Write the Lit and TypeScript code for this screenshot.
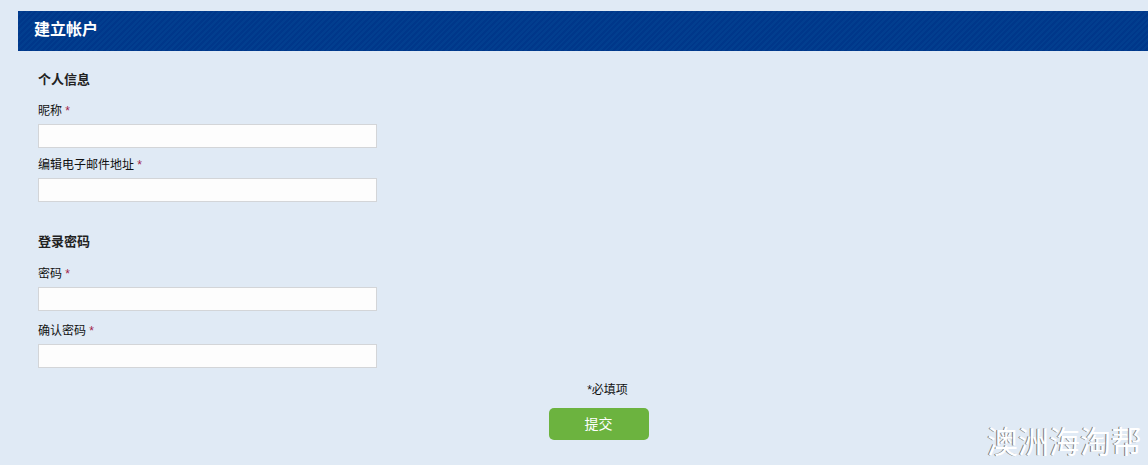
import { LitElement, html, css } from "lit";
import { customElement } from "lit/decorators.js";

@customElement("app-root")
export class AppRoot extends LitElement {
  static styles = css`
    :host {
      display: block;
      position: relative;
      height: 465px;
      overflow: hidden;
      box-sizing: border-box;
      padding: 11px 0 0 18px;
      background: #e0eaf5;
      font-family: "Liberation Sans", "Noto Sans CJK SC", sans-serif;
      color: #111;
      font-size: 12px;
    }

    .banner {
      height: 40px;
      box-sizing: border-box;
      padding: 0 0 7px 16px;
      display: flex;
      align-items: center;
      color: #fff;
      font-size: 16px;
      font-weight: 700;
      background: repeating-linear-gradient(
        135deg,
        #00378a 0 2px,
        #023e8f 2px 4px
      );
    }

    form {
      padding: 20px 0 0 20px;
      display: flex;
      flex-direction: column;
    }

    h2 {
      margin: 0 0 14px;
      font-size: 13px;
      line-height: 18px;
      font-weight: 700;
      color: #222;
    }

    .field {
      display: flex;
      flex-direction: column;
      margin-bottom: 9px;
    }

    label {
      line-height: 16px;
      margin-bottom: 5px;
    }

    .req {
      color: #a01c48;
    }

    input {
      width: 339px;
      height: 24px;
      box-sizing: border-box;
      margin: 0;
      background: #fdfdfd;
      border: 1px solid #d3d5d8;
      padding: 0 4px;
    }

    .password {
      margin-top: 22px;
    }

    .password h2 {
      margin-bottom: 15px;
    }

    .password .field {
      margin-bottom: 12px;
    }

    .foot {
      margin-left: -38px;
      width: 1197px;
      display: flex;
      flex-direction: column;
      align-items: center;
    }

    .foot p {
      margin: 1px 0 9px 18px;
      line-height: 18px;
    }

    button {
      width: 100px;
      height: 32px;
      border: 0;
      border-radius: 5px;
      padding: 0 0 2px;
      background: #6cb33f;
      color: #fff;
      font: inherit;
      font-size: 14px;
    }

    .mark {
      position: absolute;
      right: 6px;
      bottom: 4px;
      font-size: 31px;
      line-height: 36px;
      color: #fff;
      text-shadow: -1px 0 0 #777;
    }
  `;

  renderField(name: string) {
    return html`
      <div class="field">
        <label>${name} <span class="req">*</span></label>
        <input type="text" />
      </div>
    `;
  }

  render() {
    return html`
      <div class="banner">建立帐户</div>
      <form>
        <div class="group">
          <h2>个人信息</h2>
          ${this.renderField("昵称")} ${this.renderField("编辑电子邮件地址")}
        </div>
        <div class="group password">
          <h2>登录密码</h2>
          ${this.renderField("密码")} ${this.renderField("确认密码")}
        </div>
        <div class="foot">
          <p>*必填项</p>
          <button type="button">提交</button>
        </div>
      </form>
      <div class="mark">澳洲海淘帮</div>
    `;
  }
}
